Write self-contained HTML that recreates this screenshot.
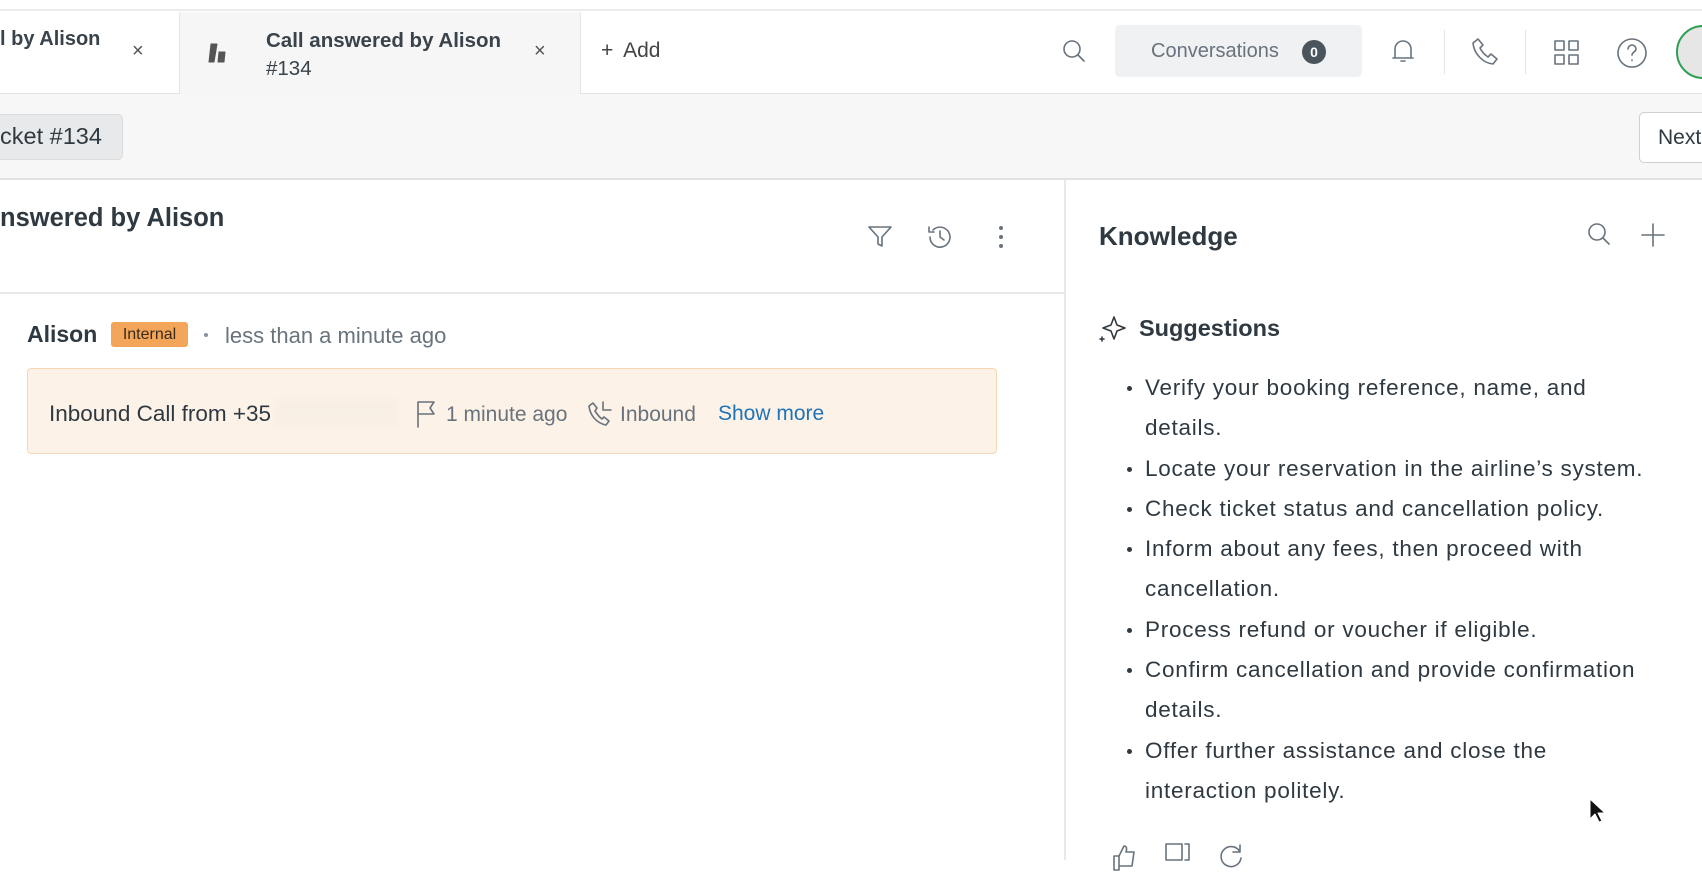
<!DOCTYPE html>
<html><head><style>
*{margin:0;padding:0;box-sizing:border-box}
body{width:1702px;height:860px;overflow:hidden;background:#fff;font-family:"Liberation Sans",Arial,sans-serif;color:#2f3941;position:relative}
.a{position:absolute;white-space:nowrap}
svg{position:absolute;fill:none;stroke:#68737d;stroke-width:1.6;stroke-linecap:round;stroke-linejoin:round}
li{list-style:none;position:relative}
li::before{content:"";position:absolute;left:-18px;top:18px;width:5px;height:5px;border-radius:3px;background:#2f3941}
</style></head><body>
<div class="a" style="left:0;top:0;width:1702px;height:11px;background:#fff;border-bottom:2px solid #ececec"></div>
<div class="a" style="left:0;top:12px;width:1702px;height:82px;background:#fff;border-bottom:1px solid #e4e4e4"></div>
<div class="a" style="left:179px;top:12px;width:402px;height:82px;background:#f6f6f6;border-left:1px solid #e6e6e6;border-right:1px solid #e6e6e6"></div>
<div class="a" style="left:0;top:28px;font-size:20px;font-weight:bold;color:#3a434b">l by Alison</div>
<div class="a" style="left:132px;top:40px;font-size:20px;color:#555">×</div>
<svg style="left:208px;top:42px" width="30" height="24" viewBox="0 0 30 24"><path d="M3 2h6l-3 18H1z M11 10h6l-1 10h-6z" fill="#555" stroke="#555" stroke-width="1"/></svg>
<div class="a" style="left:266px;top:27px;font-size:20.5px;font-weight:bold;color:#3a434b;line-height:28px">Call answered by Alison<br><span style="font-weight:normal">#134</span></div>
<div class="a" style="left:534px;top:40px;font-size:20px;color:#555">×</div>
<div class="a" style="left:601px;top:39px;font-size:21px;color:#444">+ <span style="margin-left:4px">Add</span></div>
<svg style="left:1060px;top:37px" width="28" height="28" viewBox="0 0 28 28"><circle cx="12" cy="12" r="8"/><path d="M18 18l6 6"/></svg>
<div class="a" style="left:1115px;top:25px;width:247px;height:52px;background:#eff1f2;border-radius:5px"></div>
<div class="a" style="left:1151px;top:40px;font-size:20px;color:#68737d">Conversations</div>
<div class="a" style="left:1302px;top:40px;width:24px;height:24px;border-radius:12px;background:#49545c;color:#fff;font-size:14px;font-weight:bold;text-align:center;line-height:24px">0</div>
<svg style="left:1388px;top:36px" width="30" height="30" viewBox="0 0 30 30"><path d="M7 22V13a8 8 0 0116 0v9H7zM5 22h20M13 25h4"/></svg>
<div class="a" style="left:1444px;top:30px;width:1px;height:44px;background:#e4e4e4"></div>
<svg style="left:1468px;top:36px" width="32" height="32" viewBox="0 0 32 32"><path d="M5 7l5-4 5 6-3 3c2 4 5 7 8 9l3-3 6 5-4 5C15 27 6 18 5 7z"/></svg>
<div class="a" style="left:1525px;top:30px;width:1px;height:44px;background:#e4e4e4"></div>
<svg style="left:1553px;top:39px" width="28" height="28" viewBox="0 0 28 28"><rect x="2" y="2" width="9" height="9"/><rect x="16" y="2" width="9" height="9"/><rect x="2" y="16" width="9" height="9"/><rect x="16" y="16" width="9" height="9"/></svg>
<svg style="left:1616px;top:37px" width="32" height="32" viewBox="0 0 32 32"><circle cx="16" cy="16" r="14"/><path d="M12 12a4 4 0 118 0c0 3-4 3-4 6M16 23v0.5"/></svg>
<div class="a" style="left:1676px;top:25px;width:54px;height:54px;border-radius:50%;border:2px solid #2f9e55;background:#e6e6e6"></div>
<div class="a" style="left:0;top:94px;width:1702px;height:86px;background:#f7f7f7;border-bottom:2px solid #e2e2e2"></div>
<div class="a" style="left:-10px;top:114px;width:133px;height:46px;background:#e8e9ea;border:1px solid #dcdcdc;border-radius:5px"></div>
<div class="a" style="left:0;top:123px;font-size:23.5px;color:#2f3941">cket #134</div>
<div class="a" style="left:1639px;top:112px;width:80px;height:51px;background:#fff;border:1px solid #cfcfcf;border-radius:5px"></div>
<div class="a" style="left:1658px;top:126px;font-size:21px;color:#2f3941">Next</div>
<div class="a" style="left:1064px;top:180px;width:2px;height:680px;background:#e8e8e8"></div>
<div class="a" style="left:0;top:204px;font-size:25.5px;font-weight:bold;color:#2f3941">nswered by Alison</div>
<svg style="left:866px;top:223px" width="28" height="28" viewBox="0 0 28 28"><path d="M3 4h22l-9 10v9l-4-2v-7z"/></svg>
<svg style="left:925px;top:222px" width="30" height="30" viewBox="0 0 30 30"><path d="M5 15a10 10 0 103-7M4 5v5h5M15 9v6l4 3"/></svg>
<div class="a" style="left:999px;top:226px;width:4px;height:4px;border-radius:2px;background:#68737d;box-shadow:0 9px 0 #68737d,0 18px 0 #68737d"></div>
<div class="a" style="left:0;top:292px;width:1064px;height:2px;background:#e8e8e8"></div>
<div class="a" style="left:27px;top:321px;font-size:23px;font-weight:bold;color:#2f3941">Alison</div>
<div class="a" style="left:111px;top:322px;width:77px;height:25px;background:#f3a55a;border-radius:3px;font-size:16px;color:#3a2a1a;text-align:center;line-height:25px">Internal</div>
<div class="a" style="left:204px;top:333px;width:4px;height:4px;border-radius:2px;background:#87929d"></div>
<div class="a" style="left:225px;top:323px;font-size:22px;color:#68737d">less than a minute ago</div>
<div class="a" style="left:27px;top:368px;width:970px;height:86px;background:#fdf2e7;border:1px solid #f5d7b6;border-radius:4px"></div>
<div class="a" style="left:49px;top:401px;font-size:22.5px;color:#2f3941">Inbound Call from +35</div>
<div class="a" style="left:277px;top:400px;width:119px;height:26px;background:#f7eee4;filter:blur(3px)"></div>
<svg style="left:414px;top:399px" width="26" height="30" viewBox="0 0 26 30"><path d="M4 28V3h16l-4 6 4 6H4"/></svg>
<div class="a" style="left:446px;top:403px;font-size:21px;color:#68737d">1 minute ago</div>
<svg style="left:586px;top:400px" width="30" height="30" viewBox="0 0 30 30"><path d="M3 6l4-3 4 5-2 3c2 3 4 6 7 8l2-2 5 4-3 4C10 23 4 15 3 6zM17 2v8h8"/></svg>
<div class="a" style="left:620px;top:403px;font-size:21px;color:#68737d">Inbound</div>
<div class="a" style="left:718px;top:402px;font-size:21px;color:#1f73b7">Show more</div>
<div class="a" style="left:1099px;top:221px;font-size:26px;font-weight:bold;color:#2f3941">Knowledge</div>
<svg style="left:1585px;top:220px" width="28" height="28" viewBox="0 0 28 28"><circle cx="12" cy="12" r="8"/><path d="M18 18l6 6"/></svg>
<svg style="left:1640px;top:222px" width="26" height="26" viewBox="0 0 26 26"><path d="M13 2v22M2 13h22"/></svg>
<svg style="left:1097px;top:314px" width="30" height="30" viewBox="0 0 30 30"><path d="M17 3l3 8 8 3-8 3-3 8-3-8-8-3 8-3z" stroke="#2f3941"/><path d="M5 23v4M3 25h4" stroke="#2f3941"/></svg>
<div class="a" style="left:1139px;top:315px;font-size:23.5px;font-weight:bold;color:#2f3941">Suggestions</div>
<ul class="a" style="left:1145px;top:368px;width:512px;white-space:normal;font-size:22.5px;letter-spacing:0.75px;line-height:40.3px;color:#2f3941">
<li>Verify your booking reference, name, and details.</li>
<li>Locate your reservation in the airline’s system.</li>
<li>Check ticket status and cancellation policy.</li>
<li>Inform about any fees, then proceed with cancellation.</li>
<li>Process refund or voucher if eligible.</li>
<li>Confirm cancellation and provide confirmation details.</li>
<li>Offer further assistance and close the interaction politely.</li>
</ul>
<svg style="left:1110px;top:842px" width="30" height="30" viewBox="0 0 30 30"><path d="M4 14h5v14H4zM9 14l5-10c3 0 3 3 2 6h8l-2 14H9"/></svg>
<svg style="left:1163px;top:842px" width="30" height="30" viewBox="0 0 30 30"><path d="M3 2h16v16H3zM22 2h4v16h-4"/></svg>
<svg style="left:1216px;top:842px" width="30" height="30" viewBox="0 0 30 30"><path d="M24 10a10 10 0 10 1 6M24 3v7h-7"/></svg>
<svg style="left:1588px;top:798px;stroke:#fff;stroke-width:1" width="20" height="26" viewBox="0 0 20 26"><path d="M2 1v20l5-5 4 8 3-1-4-8h7z" fill="#111"/></svg>
</body></html>
